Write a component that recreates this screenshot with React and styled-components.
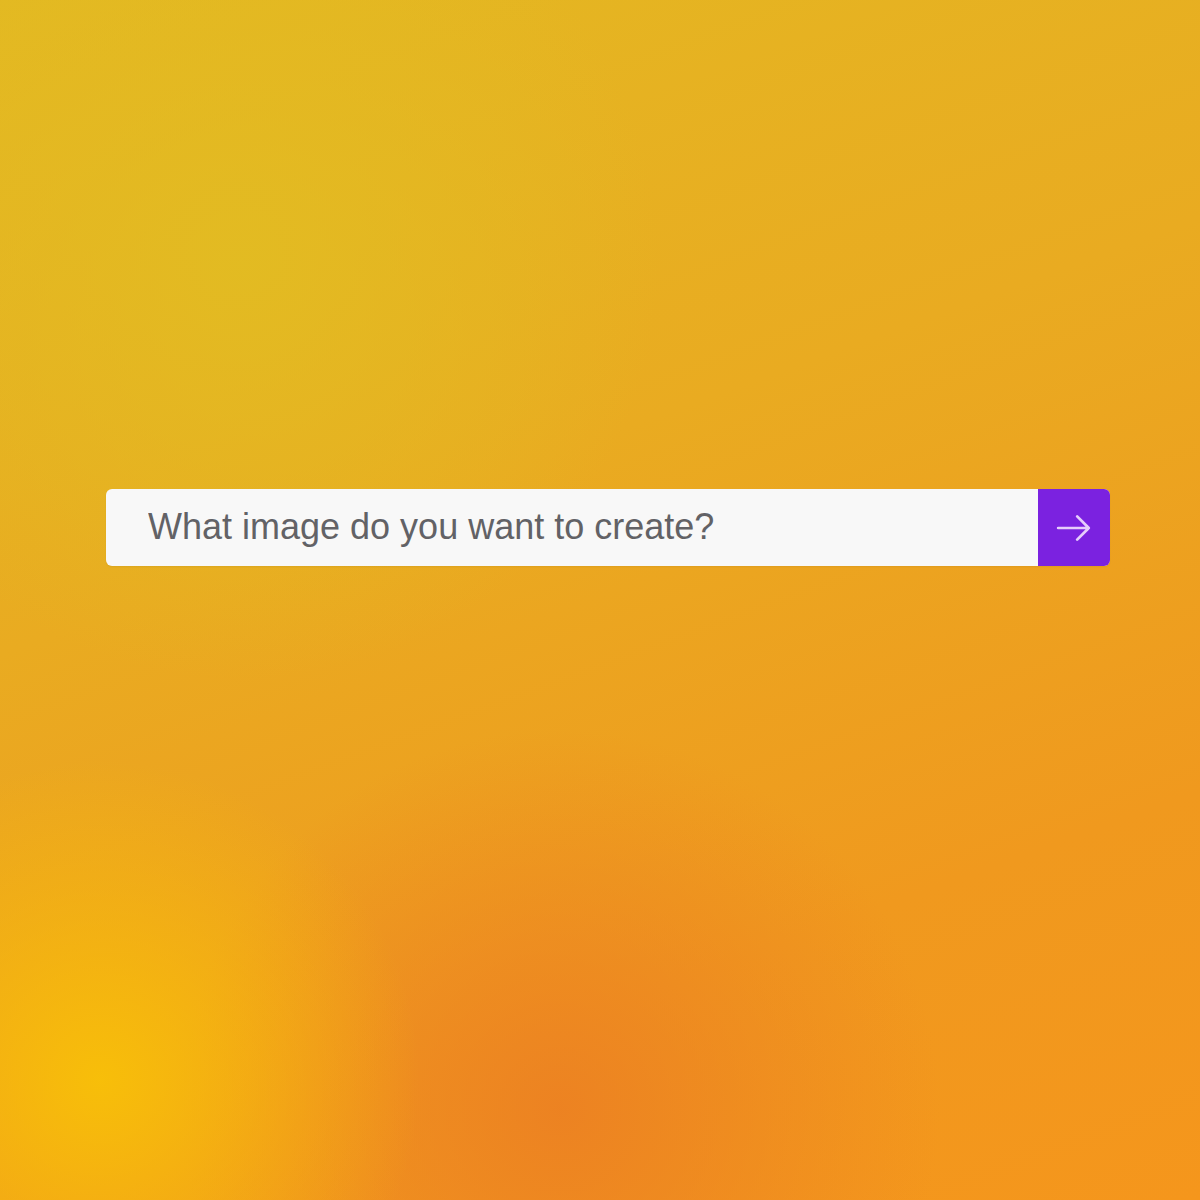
import styled, { createGlobalStyle } from "styled-components";

const GlobalStyle = createGlobalStyle`
  html, body {
    margin: 0;
    padding: 0;
  }
  body {
    font-family: "Liberation Sans", Arial, sans-serif;
  }
`;

const Page = styled.div`
  width: 1200px;
  height: 1200px;
  display: flex;
  align-items: flex-start;
  padding: 489px 0 0 106px;
  box-sizing: border-box;
  background:
    radial-gradient(circle at 100px 1080px, rgba(248, 192, 8, 0.95) 0, rgba(248, 192, 8, 0) 320px),
    radial-gradient(circle at 560px 1110px, rgba(236, 128, 34, 0.9) 0, rgba(236, 128, 34, 0) 380px),
    radial-gradient(circle at 240px 260px, rgba(226, 188, 34, 0.9) 0, rgba(226, 188, 34, 0) 420px),
    linear-gradient(160deg, #e3b922 0%, #e9ab21 40%, #f0991e 75%, #f5961c 100%);
`;

const SearchBar = styled.form`
  width: 1004px;
  height: 77px;
  display: flex;
  border-radius: 6px;
  overflow: hidden;
  background: #f8f8f8;
  box-shadow: 0 1px 2px rgba(0, 0, 0, 0.05);
`;

const Input = styled.input`
  flex: 1;
  border: none;
  outline: none;
  background: transparent;
  padding: 0 0 2px 42px;
  font-family: "Liberation Sans", Arial, sans-serif;
  font-size: 36px;
  color: #626266;

  &::placeholder {
    color: #626266;
  }
`;

const Submit = styled.button`
  width: 72px;
  border: none;
  background: #7b22e0;
  display: flex;
  align-items: center;
  justify-content: center;
  padding: 0;
  cursor: pointer;
`;

const ArrowIcon = () => (
  <svg width="38" height="38" viewBox="0 0 36 36" fill="none">
    <path
      d="M3 18h29M21 7l11 11-11 11"
      stroke="#e6cdfb"
      strokeWidth="2.6"
      strokeLinecap="round"
      strokeLinejoin="round"
    />
  </svg>
);

const App = () => {
  return (
    <>
      <GlobalStyle />
      <Page>
        <SearchBar onSubmit={(e) => e.preventDefault()}>
          <Input placeholder="What image do you want to create?" />
          <Submit type="submit">
            <ArrowIcon />
          </Submit>
        </SearchBar>
      </Page>
    </>
  );
};

export default App;
